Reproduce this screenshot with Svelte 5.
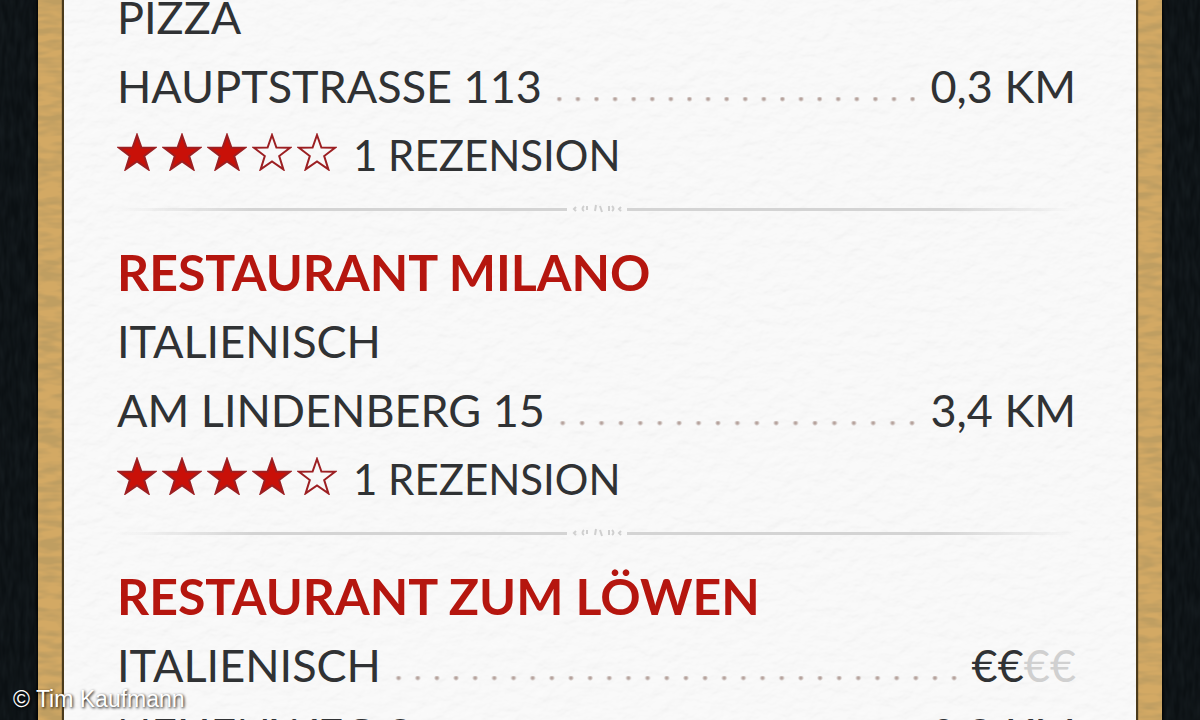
<script>
  const entries = [
    {
      category: 'Pizza',
      street: 'Hauptstrasse 113',
      distance: '0,3 km',
      stars: 3,
      reviews: '1 Rezension'
    },
    {
      name: 'Restaurant Milano',
      category: 'Italienisch',
      street: 'Am Lindenberg 15',
      distance: '3,4 km',
      stars: 4,
      reviews: '1 Rezension'
    },
    {
      name: 'Restaurant zum Löwen',
      category: 'Italienisch',
      price: 2,
      street: 'Neuenweg 2',
      distance: '0,2 km'
    }
  ]

  const starPath = 'M20 2 L24.4 14.6 L38 14.8 L27.2 23 L31.4 36.4 L20 28.4 L8.6 36.4 L12.8 23 L2 14.8 L15.6 14.6 Z'
</script>

<div class="screen">
  <svg class="texture" aria-hidden="true">
    <filter id="cloth">
      <feTurbulence type="fractalNoise" baseFrequency="0.2 0.05" numOctaves="2" seed="3" />
      <feColorMatrix values="0 0 0 0 0.1  0 0 0 0 0.14  0 0 0 0 0.16  0.4 0 0 0 -0.1" />
    </filter>
    <rect width="100%" height="100%" filter="url(#cloth)" opacity="0.5" />
  </svg>

  <div class="board">
    <svg class="texture" aria-hidden="true">
      <filter id="grain">
        <feTurbulence type="fractalNoise" baseFrequency="0.04 0.14" numOctaves="2" seed="8" />
        <feColorMatrix values="0 0 0 0 0.52  0 0 0 0 0.34  0 0 0 0 0.12  3 0 0 0 -1.1" />
      </filter>
      <rect width="100%" height="100%" filter="url(#grain)" />
    </svg>

    <main class="paper">
      <svg class="texture" aria-hidden="true">
        <filter id="fibre">
          <feTurbulence type="fractalNoise" baseFrequency="0.06 0.09" numOctaves="3" seed="5" />
          <feDiffuseLighting surfaceScale="1.2" lighting-color="#fff">
            <feDistantLight azimuth="250" elevation="75" />
          </feDiffuseLighting>
        </filter>
        <rect width="100%" height="100%" filter="url(#fibre)" opacity="0.4" />
      </svg>

      <ul class="list">
        {#each entries as entry}
          <li class="entry">
            {#if entry.name}
              <h2>{entry.name}</h2>
            {/if}
            <div class="row">
              <span>{entry.category}</span>
              {#if entry.price}
                <span class="dots"></span>
                <span>{'€'.repeat(entry.price)}<span class="rest">{'€'.repeat(4 - entry.price)}</span></span>
              {/if}
            </div>
            <div class="row">
              <span>{entry.street}</span>
              <span class="dots"></span>
              <span>{entry.distance}</span>
            </div>
            {#if entry.reviews}
              <div class="row rating">
                <span class="stars" role="img" aria-label="{entry.stars} von 5 Sternen">
                  {#each Array(5) as _, i}
                    <svg class="star" class:full={i < entry.stars} viewBox="0 0 40 38">
                      <path d={starPath} />
                    </svg>
                  {/each}
                </span>
                <span>{entry.reviews}</span>
              </div>
              <div class="divider">
                <svg class="ornament" viewBox="0 0 60 12" aria-hidden="true">
                  <path d="M9 4 L7 6 L9 8 M17 3 Q14 6 17 8 M20 3 L20 7 M29 2 L28 8 M33 3 L35 9 M42 3 L42 8 M45 3 Q48 6 45 8 M54 4 L52 6 L54 8" />
                </svg>
              </div>
            {/if}
          </li>
        {/each}
      </ul>
    </main>
  </div>

  <small class="credit">© Tim Kaufmann</small>
</div>

<style>
  :global(body) {
    background: #0c1114;
  }

  .screen {
    position: relative;
    height: 100vh;
    padding: 0 38px;
    overflow: hidden;
    background: #0b1013;
    font-family: Lato, sans-serif;
    color: #303234;
  }

  .texture {
    position: absolute;
    top: 0;
    left: 0;
    width: 100%;
    height: 100%;
  }

  .board {
    position: relative;
    height: 100%;
    padding: 0 26px;
    box-sizing: border-box;
    background: #d3a964;
    box-shadow: 0 0 3px 1px #000;
  }

  .paper {
    position: relative;
    height: 100%;
    padding: 0 60px 0 53px;
    box-sizing: border-box;
    background: #f7f7f7;
    box-shadow: 0 0 1px 2px #4a3a1c;
  }

  .list {
    position: relative;
    margin: 0;
    padding: 0;
    list-style: none;
    text-transform: uppercase;
  }

  .entry {
    display: flex;
    flex-direction: column;
    gap: 35px;
    padding-bottom: 40px;
  }

  h2 {
    margin: 0;
    font-size: 50px;
    line-height: 34px;
    font-weight: 700;
    color: #b5160f;
  }

  .row {
    display: flex;
    align-items: baseline;
    height: 34px;
    font-size: 45px;
    line-height: 34px;
  }

  .dots {
    flex: 1;
    height: 6px;
    margin: 0 8px;
    background: radial-gradient(circle at 50% 2px, #b5a29c 1px, transparent 3px) 0 0 / 19px 6px round;
  }

  .rest {
    color: #d0d0d0;
  }

  .rating {
    font-size: 42px;
  }

  .stars {
    display: flex;
    gap: 5px;
    margin: -8px 16px 0 0;
  }

  .star {
    width: 40px;
    height: 38px;
    fill: none;
    stroke: #9c1f22;
    stroke-width: 2;
  }

  .star.full {
    fill: #c91008;
  }

  .divider {
    display: flex;
    align-items: center;
    height: 12px;
    margin-top: -4px;
  }

  .divider::before,
  .divider::after {
    content: '';
    flex: 1;
    height: 3px;
    background: linear-gradient(to right, transparent, #d4d4d4 30%);
  }

  .divider::after {
    background: linear-gradient(to left, transparent, #d4d4d4 30%);
  }

  .ornament {
    width: 60px;
    height: 12px;
    fill: none;
    stroke: #cfcfcf;
    stroke-width: 2;
  }

  .credit {
    position: absolute;
    left: 13px;
    bottom: 7px;
    font-family: 'Liberation Sans', sans-serif;
    font-size: 23px;
    line-height: 28px;
    color: #fff;
    text-shadow: 1px 1px 3px #000;
  }
</style>
